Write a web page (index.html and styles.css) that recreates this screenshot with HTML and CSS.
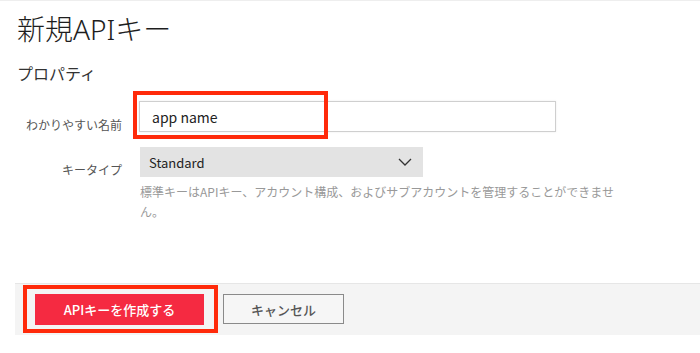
FILE: index.html
```html
<!DOCTYPE html>
<html lang="ja">

<head>
    <meta charset="UTF-8">
    <meta name="viewport" content="width=device-width, initial-scale=1.0">
    <title>新規APIキー</title>
    <link rel="stylesheet" href="styles.css">
</head>

<body>
    <div class="page">
        <h1 class="title">新規<span class="latin">API</span>キー</h1>
        <h2 class="section-title">プロパティ</h2>

        <div class="form">
            <!-- Friendly name -->
            <label class="form-label" for="key-name">わかりやすい名前</label>
            <div class="form-field">
                <input id="key-name" class="text-input" type="text" value="app name">
                <span class="mark mark-input"></span>
            </div>

            <!-- Key type -->
            <label class="form-label">キータイプ</label>
            <div class="form-field">
                <div class="select">
                    <span>Standard</span>
                    <svg class="chevron" width="14" height="8" viewBox="0 0 14 8">
                        <path d="M1 1 L7 7 L13 1" fill="none" stroke="#333" stroke-width="1.3" />
                    </svg>
                </div>
            </div>

            <span></span>
            <p class="help-text">標準キーはAPIキー、アカウント構成、およびサブアカウントを管理することができません。</p>
        </div>
    </div>

    <!-- Action bar -->
    <div class="footer">
        <div class="btn-wrap">
            <button class="btn btn-primary">APIキーを作成する</button>
            <span class="mark mark-button"></span>
        </div>
        <button class="btn btn-secondary">キャンセル</button>
    </div>
</body>

</html>
```

FILE: styles.css
```css
/* General reset */
* {
    margin: 0;
    padding: 0;
    box-sizing: border-box;
}

body {
    font-family: "Noto Sans CJK JP", "Noto Sans", sans-serif;
    color: #222;
    background: #fff;
    border-top: 1px solid #eee;
    height: 353px;
    overflow: hidden;
}

.page {
    padding-left: 17px;
}

.title {
    font-size: 28px;
    font-weight: 300;
    line-height: 36px;
    margin-top: 9px;
    color: #1e1e1e;
}

/* wider latin letters in the heading */
.title .latin {
    font-family: "Noto Sans", sans-serif;
    font-weight: 300;
}

.section-title {
    font-size: 16px;
    font-weight: 400;
    line-height: 24px;
    margin-top: 14px;
    color: #333;
}

/* Form grid */
.form {
    display: grid;
    grid-template-columns: 105px auto;
    column-gap: 17px;
    align-items: center;
    margin-top: 16px;
}

.form-label {
    font-size: 12px;
    color: #555;
    text-align: right;
}

.form-field {
    position: relative;
    margin-bottom: 15px;
}

.text-input {
    display: block;
    width: 417px;
    height: 31px;
    border: 1px solid #cfcfcf;
    box-shadow: 0 0 2px rgba(0, 0, 0, 0.08);
    padding: 0 12px;
    font-family: inherit;
    font-size: 14px;
    color: #222;
    outline: none;
}

.select {
    display: flex;
    align-items: center;
    justify-content: space-between;
    width: 283px;
    height: 30px;
    margin-left: 1px;
    padding: 0 11px 0 9px;
    background: #e3e3e3;
    font-size: 13px;
    color: #222;
}

.chevron {
    display: block;
}

.help-text {
    grid-column: 2;
    width: 478px;
    margin-top: -10px;
    margin-left: 1px;
    font-size: 12px;
    line-height: 20px;
    color: #999;
}

/* Red highlight boxes */
.mark {
    position: absolute;
    border: 4px solid #ff2a0a;
    pointer-events: none;
}

.mark-input {
    left: -6px;
    top: -10px;
    width: 195px;
    height: 48px;
}

.mark-button {
    left: -12px;
    top: -9px;
    width: 195px;
    height: 48px;
}

/* Footer action bar */
.footer {
    display: flex;
    align-items: flex-start;
    gap: 19px;
    margin-left: 15px;
    margin-top: 61px;
    height: 52px;
    padding: 10px 20px 0;
    background: #f4f4f4;
    border-top: 1px solid #e6e6e6;
}

.btn-wrap {
    position: relative;
}

.btn {
    font-family: inherit;
    font-size: 13px;
    font-weight: 500;
    cursor: pointer;
}

.btn-primary {
    display: block;
    width: 169px;
    height: 31px;
    border: none;
    background: #f52a41;
    color: #fff;
}

.btn-secondary {
    width: 121px;
    height: 30px;
    border: 1px solid #8a8a8a;
    background: #f6f6f6;
    color: #555;
}
```
